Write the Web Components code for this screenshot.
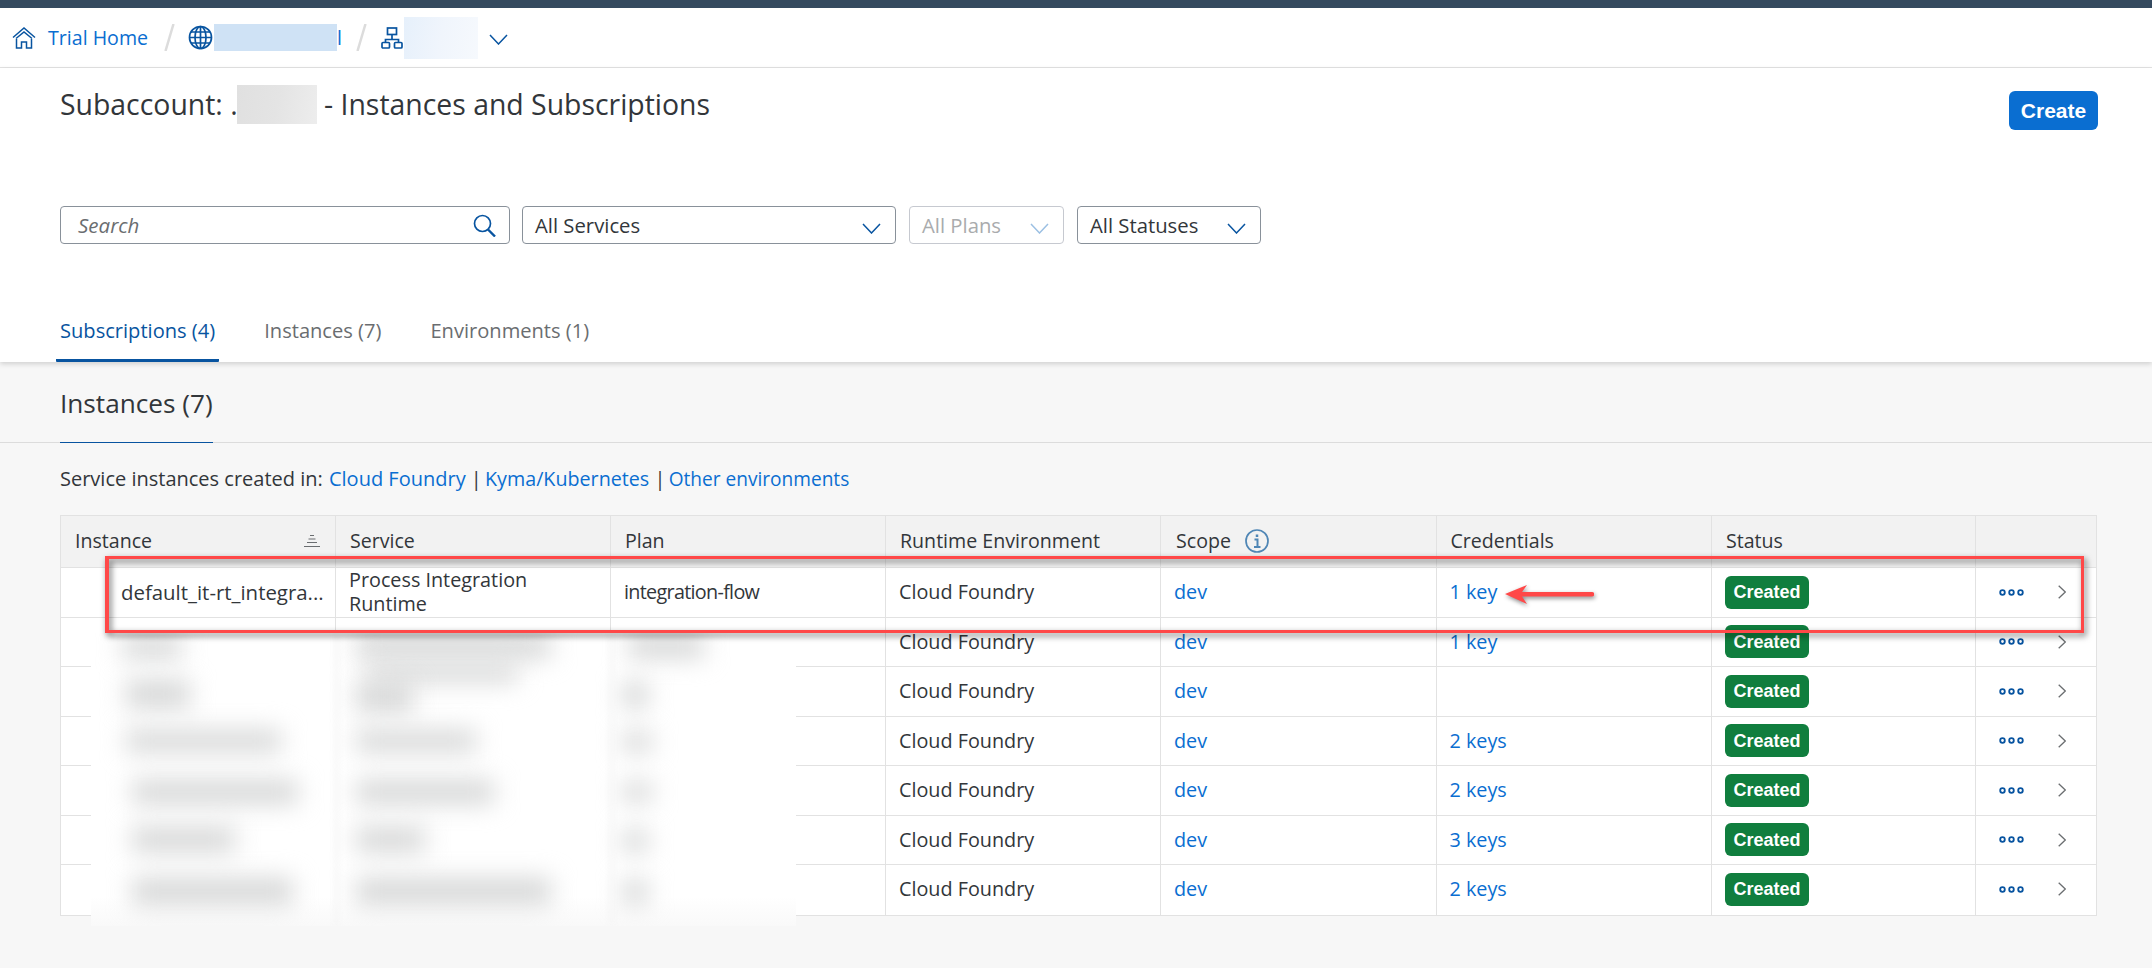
<!DOCTYPE html>
<html lang="en">
<head>
<meta charset="utf-8">
<title>Instances and Subscriptions</title>
<style>
  html, body { margin: 0; padding: 0; }
  body {
    position: relative;
    width: 2152px;
    height: 968px;
    overflow: hidden;
    background: #f7f7f7;
    color: #32363a;
    font-family: 'Open Sans', 'Noto Sans', sans-serif;
    font-size: 20px;
  }
</style>
</head>
<body>
<shell-nav></shell-nav>
<page-head></page-head>
<instances-section>
  <instance-table>
    <instance-row name="default_it-rt_integra..." service="Process Integration|Runtime" plan="integration-flow" keys="1 key"></instance-row>
    <instance-row keys="1 key"></instance-row>
    <instance-row></instance-row>
    <instance-row keys="2 keys"></instance-row>
    <instance-row keys="2 keys"></instance-row>
    <instance-row keys="3 keys"></instance-row>
    <instance-row keys="2 keys" last></instance-row>
  </instance-table>
</instances-section>
<redact-overlay></redact-overlay>
<row-callout></row-callout>

<script>
const CHEVRON = (color) => `<svg width="19" height="11" viewBox="0 0 19 11" fill="none" stroke="${color}" stroke-width="1.5"><path d="M1 1l8.500 9L18 1"/></svg>`;

class ShellNav extends HTMLElement {
  constructor() {
    super();
    this.attachShadow({ mode: 'open' }).innerHTML = `
      <style>
        :host {
          display: flex;
          align-items: center;
          box-sizing: border-box;
          height: 68px;
          border-top: 8px solid #354a5f;
          border-bottom: 1px solid #e4e4e4;
          background: #fff;
          padding-left: 12px;
          color: #0a6ed1;
          font-size: 19.6px;
        }
        svg { display: block; flex: none; }
        .home-label { margin-left: 12px; }
        .slash { flex: none; margin: 0 13px 0 16px; }
        .smudge-a { width: 123px; height: 27px; background: #cfe2f5; margin-left: 1px; }
        .tail { width: 4px; }
        .smudge-b {
          width: 74px; height: 42px; margin-left: 1px;
          background: linear-gradient(100deg, #e6f0fb, #f0f5fc 50%, #f6f9fd);
        }
        .chev { margin-left: 11px; margin-top: 3px; }
      </style>
      <svg width="24" height="22" viewBox="0 0 24 22" fill="none" stroke="#0854a0" stroke-width="1.5">
        <path d="M1 10.500L12 1l11 9.500"/>
        <path d="M4 11.500L12 5l8 6.500"/>
        <path d="M4.500 12v9h5v-6h5v6h5v-9"/>
      </svg>
      <span class="home-label">Trial Home</span>
      <svg class="slash" width="11" height="27" viewBox="0 0 11 27"><path d="M9.500 0L1.500 27" stroke="#dcdcdc" stroke-width="2.500"/></svg>
      <svg width="25" height="25" viewBox="0 0 25 25" fill="none" stroke="#0854a0" stroke-width="1.700">
        <circle cx="12.500" cy="12.500" r="11"/>
        <ellipse cx="12.500" cy="12.500" rx="5.500" ry="11"/>
        <path d="M1.500 12.500h22M3 7h19M3 18h19M12.500 1.500v22"/>
      </svg>
      <div class="smudge-a"></div>
      <span class="tail">l</span>
      <svg class="slash" style="margin:0 14px 0 15px" width="11" height="27" viewBox="0 0 11 27"><path d="M9.500 0L1.500 27" stroke="#dcdcdc" stroke-width="2.500"/></svg>
      <svg width="22" height="22" viewBox="0 0 22 22" fill="none" stroke="#0854a0" stroke-width="1.700">
        <rect x="6.500" y="1" width="9" height="6.500"/>
        <path d="M11 7.500v5M4.500 15.500v-3h13v3"/>
        <rect x="1" y="15.500" width="7.500" height="5.500" rx="1"/>
        <rect x="13.500" y="15.500" width="7.500" height="5.500" rx="1"/>
      </svg>
      <div class="smudge-b"></div>
      <span class="chev">${CHEVRON('#0854a0')}</span>
    `;
  }
}

class FilterSelect extends HTMLElement {
  static get observedAttributes() { return ['label']; }

  constructor() {
    super();
    this.attachShadow({ mode: 'open' }).innerHTML = `
      <style>
        :host {
          display: flex;
          align-items: center;
          justify-content: space-between;
          box-sizing: border-box;
          height: 38px;
          border: 1px solid #89919a;
          border-radius: 4px;
          background: #fff;
          padding: 0 14px 0 12px;
          color: #32363a;
          font-size: 20.300px;
        }
        :host([disabled]) { border-color: #c6c9d0; color: #a9abad; }
        svg { display: block; margin-top: 7px; }
      </style>
      <span class="label"></span>
      <span class="arrow"></span>
    `;
  }

  attributeChangedCallback(name, oldVal, newVal) {
    this.shadowRoot.querySelector('.label').textContent = newVal;
    this.shadowRoot.querySelector('.arrow').innerHTML = CHEVRON(this.hasAttribute('disabled') ? '#9cc0e3' : '#0854a0');
  }
}

class SearchField extends HTMLElement {
  constructor() {
    super();
    this.attachShadow({ mode: 'open' }).innerHTML = `
      <style>
        :host {
          display: flex;
          align-items: center;
          justify-content: space-between;
          box-sizing: border-box;
          height: 38px;
          border: 1px solid #89919a;
          border-radius: 4px;
          background: #fff;
          padding: 0 13px 0 17px;
          font-size: 20.500px;
          font-style: italic;
          color: #6a6d70;
        }
        svg { display: block; }
      </style>
      <span>Search</span>
      <svg width="23" height="23" viewBox="0 0 23 23" fill="none" stroke="#0854a0" stroke-width="1.700">
        <circle cx="9.500" cy="9.500" r="8"/>
        <path d="M15 15.500l7 7" stroke-width="2.400"/>
      </svg>
    `;
  }
}

class PageHead extends HTMLElement {
  constructor() {
    super();
    this.attachShadow({ mode: 'open' }).innerHTML = `
      <style>
        :host {
          display: block;
          position: relative;
          height: 294px;
          box-sizing: border-box;
          background: #fff;
          box-shadow: 0 2px 5px rgba(0,0,0,.16);
          padding: 0 54px 0 60px;
        }
        .title-row {
          display: flex;
          justify-content: space-between;
          align-items: flex-start;
          height: 138px;
        }
        h1 {
          display: flex;
          align-items: center;
          margin: 16px 0 0;
          height: 40px;
          font-size: 28.400px;
          font-weight: 400;
          white-space: pre;
        }
        .smudge { width: 80px; height: 39px; background: linear-gradient(100deg, #e0e0e0, #e4e4e4 50%, #ededed); margin-left: -1px; }
        button {
          margin-top: 23px;
          width: 89px;
          height: 39px;
          border: 0;
          border-radius: 6px;
          background: #0a6ed1;
          color: #fff;
          font-family: 'Liberation Sans', sans-serif;
          font-weight: 700;
          font-size: 21px;
          padding: 0;
        }
        .filters { display: flex; gap: 12px; }
        search-field { width: 450px; }
        .services { width: 374px; }
        .plans { width: 155px; margin-left: 1px; }
        .statuses { width: 184px; margin-left: 1px; }
        .tabs { display: flex; gap: 41px; margin: 56px 0 0 -4px; }
        .tab {
          box-sizing: border-box;
          height: 62px;
          padding: 18px 4px 0;
          line-height: 26px;
          font-size: 20.100px;
          color: #6a6d70;
        }
        .tab.on { color: #0854a0; border-bottom: 3px solid #0854a0; border-radius: 0 0 1px 1px; }
      </style>
      <div class="title-row">
        <h1>Subaccount: .<span class="smudge"></span> - Instances and Subscriptions</h1>
        <button>Create</button>
      </div>
      <div class="filters">
        <search-field></search-field>
        <filter-select class="services" label="All Services"></filter-select>
        <filter-select class="plans" label="All Plans" disabled></filter-select>
        <filter-select class="statuses" label="All Statuses"></filter-select>
      </div>
      <div class="tabs">
        <div class="tab on">Subscriptions (4)</div>
        <div class="tab">Instances (7)</div>
        <div class="tab">Environments (1)</div>
      </div>
    `;
  }
}

class InstancesSection extends HTMLElement {
  constructor() {
    super();
    this.attachShadow({ mode: 'open' }).innerHTML = `
      <style>
        :host { display: block; padding-top: 25px; }
        .head { display: block; border-bottom: 1px solid #dcdcdc; padding-left: 60px; height: 55px; }
        h2 {
          display: inline-block;
          margin: 0;
          height: 55px;
          line-height: 32px;
          font-size: 26.200px;
          font-weight: 400;
          border-bottom: 1px solid #0854a0;
        }
        p { margin: 23px 0 23px 60px; line-height: 26px; font-size: 20px; }
        a { color: #0a6ed1; text-decoration: none; }
        a.cf { margin-left: 1px; }
        a.kyma { margin-left: -2px; font-size: 19.700px; }
        a.other { margin-left: -2px; font-size: 19.100px; }
        .sep { margin-left: -1px; }
        .body { padding: 0 54px 0 60px; }
      </style>
      <div class="head"><h2>Instances (7)</h2></div>
      <p>Service instances created in: <a class="cf">Cloud Foundry</a> | <a class="kyma">Kyma/Kubernetes</a> | <a class="other">Other environments</a></p>
      <div class="body"><slot></slot></div>
    `;
  }
}

class InstanceTable extends HTMLElement {
  constructor() {
    super();
    this.attachShadow({ mode: 'open' }).innerHTML = `
      <style>
        :host {
          display: block;
          box-sizing: border-box;
          width: 2037px;
          border: 1px solid #e2e2e2;
          background: #fff;
          --cols: 275px 275px 275px 275px 275.500px 275.500px 264px 120px;
        }
        .header {
          display: grid;
          grid-template-columns: var(--cols);
          height: 52px;
          background: #f2f2f2;
          border-bottom: 1px solid #e2e2e2;
          box-sizing: border-box;
        }
        .header div {
          display: flex;
          align-items: center;
          justify-content: space-between;
          box-sizing: border-box;
          padding: 0 15px 2px 14px;
          border-right: 1px solid #e2e2e2;
          font-size: 19.600px;
          color: #32363a;
        }
        .header div:last-child { border-right: 0; }
        .scope { justify-content: flex-start !important; gap: 14px; padding-left: 15px !important; }
        svg { display: block; }
      </style>
      <div class="header">
        <div>Instance
          <svg width="16" height="12" viewBox="0 0 16 12" stroke="#6a6d70" stroke-width="1"><path d="M6 .5h4M4.500 4h7M3 7.500h10M0 11.500h16"/></svg>
        </div>
        <div>Service</div>
        <div>Plan</div>
        <div>Runtime Environment</div>
        <div class="scope">Scope
          <svg width="24" height="24" viewBox="0 0 24 24" fill="none" stroke="#4f86b5" stroke-width="1.700">
            <circle cx="12" cy="12" r="11"/>
            <path d="M9.500 10.500h3v7M9 18h6.500" stroke-width="2"/>
            <path d="M12 5.500v2.500" stroke-width="2.500"/>
          </svg>
        </div>
        <div>Credentials</div>
        <div>Status</div>
        <div></div>
      </div>
      <slot></slot>
    `;
  }
}

class StatusBadge extends HTMLElement {
  constructor() {
    super();
    this.attachShadow({ mode: 'open' }).innerHTML = `
      <style>
        :host {
          display: inline-flex;
          align-items: center;
          justify-content: center;
          width: 84px;
          height: 33px;
          border-radius: 6px;
          background: #107e3e;
          color: #fff;
          font-family: 'Liberation Sans', sans-serif;
          font-weight: 700;
          font-size: 18px;
        }
      </style>
      <slot></slot>
    `;
  }
}

class InstanceRow extends HTMLElement {
  connectedCallback() {
    if (this.shadowRoot) return;
    const name = this.getAttribute('name') || '';
    const service = (this.getAttribute('service') || '').split('|').join('<br>');
    const plan = this.getAttribute('plan') || '';
    const keys = this.getAttribute('keys') || '';
    this.attachShadow({ mode: 'open' }).innerHTML = `
      <style>
        :host {
          display: grid;
          grid-template-columns: 275px 275px 275px 275px 275.500px 275.500px 264px 120px;
          box-sizing: border-box;
          height: 49.500px;
          border-bottom: 1px solid #e2e2e2;
        }
        :host([last]) { height: 50px; border-bottom: 0; }
        :host([last]) .c { padding-bottom: 2px; }
        .c {
          display: flex;
          align-items: center;
          box-sizing: border-box;
          padding-left: 13px;
          border-right: 1px solid #e2e2e2;
          font-size: 19.800px;
          line-height: 24px;
          white-space: nowrap;
        }
        .c:last-child { border-right: 0; padding-left: 23px; }
        .name { padding-left: 60px; font-size: 20.400px; }
        .plan { letter-spacing: -.7px; }
        .status { padding-left: 13px; }
        a { color: #0a6ed1; text-decoration: none; }
        svg { display: block; flex: none; }
        .more { margin-right: 34px; }
      </style>
      <div class="c name">${name}</div>
      <div class="c"><span>${service}</span></div>
      <div class="c plan">${plan}</div>
      <div class="c">Cloud Foundry</div>
      <div class="c"><a>dev</a></div>
      <div class="c"><a>${keys}</a></div>
      <div class="c status"><status-badge>Created</status-badge></div>
      <div class="c">
        <svg class="more" width="25" height="7" viewBox="0 0 25 7" fill="none" stroke="#0854a0" stroke-width="1.800">
          <circle cx="3.500" cy="3.500" r="2.300"/><circle cx="12.500" cy="3.500" r="2.300"/><circle cx="21.500" cy="3.500" r="2.300"/>
        </svg>
        <svg width="8" height="14" viewBox="0 0 8 14" fill="none" stroke="#6a6d70" stroke-width="1.300"><path d="M.7.7L7.300 7 .7 13.300"/></svg>
      </div>
    `;
  }
}

// blurred-out part of the screenshot, lies over rows 2-7 of the table
const SMUDGES = [
  [122, 636, 60, 22], [356, 634, 195, 24], [628, 634, 76, 24],
  [126, 680, 64, 28], [367, 664, 150, 18], [356, 682, 57, 30], [622, 682, 26, 26],
  [126, 730, 155, 22], [356, 730, 120, 22], [622, 732, 30, 20],
  [132, 780, 166, 24], [356, 780, 138, 24], [622, 782, 30, 20],
  [132, 827, 103, 25], [356, 827, 69, 25], [622, 830, 26, 22],
  [132, 878, 161, 27], [356, 878, 195, 27], [622, 880, 26, 24]
];

class RedactOverlay extends HTMLElement {
  constructor() {
    super();
    const marks = SMUDGES.map(([x, y, w, h]) =>
      `<i style="left:${x - 91}px;top:${y - 633}px;width:${w}px;height:${h}px"></i>`).join('');
    this.attachShadow({ mode: 'open' }).innerHTML = `
      <style>
        :host {
          position: absolute;
          left: 91px;
          top: 633px;
          width: 705px;
          height: 293px;
          overflow: hidden;
          background: linear-gradient(#fff 0, #fff 90%, #f9f9f9 100%);
        }
        i {
          position: absolute;
          background: #d6d7d7;
          filter: blur(12px);
        }
        b {
          position: absolute;
          top: 0;
          bottom: 0;
          width: 3px;
          background: #f4f4f4;
          filter: blur(3px);
        }
      </style>
      ${marks}
      <b style="left:244px"></b>
      <b style="left:519px"></b>
    `;
  }
}

class RowCallout extends HTMLElement {
  constructor() {
    super();
    this.attachShadow({ mode: 'open' }).innerHTML = `
      <style>
        :host { position: absolute; left: 0; top: 0; }
        .box {
          position: absolute;
          left: 105px;
          top: 556px;
          width: 1979px;
          height: 77px;
          box-sizing: border-box;
          border: 3px solid #ff4848;
          border-left-width: 4px;
          filter: drop-shadow(2px 3px 3px rgba(0,0,0,.6));
        }
        svg {
          position: absolute;
          left: 1505px;
          top: 584px;
          filter: drop-shadow(1px 2px 2px rgba(0,0,0,.45));
        }
      </style>
      <div class="box"></div>
      <svg width="89" height="21" viewBox="0 0 89 21">
        <path d="M0 10L22 1l-5 7h70a2.200 2.200 0 0 1 0 4.500H17l5 7.500z" fill="#ff4848"/>
      </svg>
    `;
  }
}

customElements.define('shell-nav', ShellNav);
customElements.define('filter-select', FilterSelect);
customElements.define('search-field', SearchField);
customElements.define('page-head', PageHead);
customElements.define('instances-section', InstancesSection);
customElements.define('instance-table', InstanceTable);
customElements.define('status-badge', StatusBadge);
customElements.define('instance-row', InstanceRow);
customElements.define('redact-overlay', RedactOverlay);
customElements.define('row-callout', RowCallout);
</script>
</body>
</html>
